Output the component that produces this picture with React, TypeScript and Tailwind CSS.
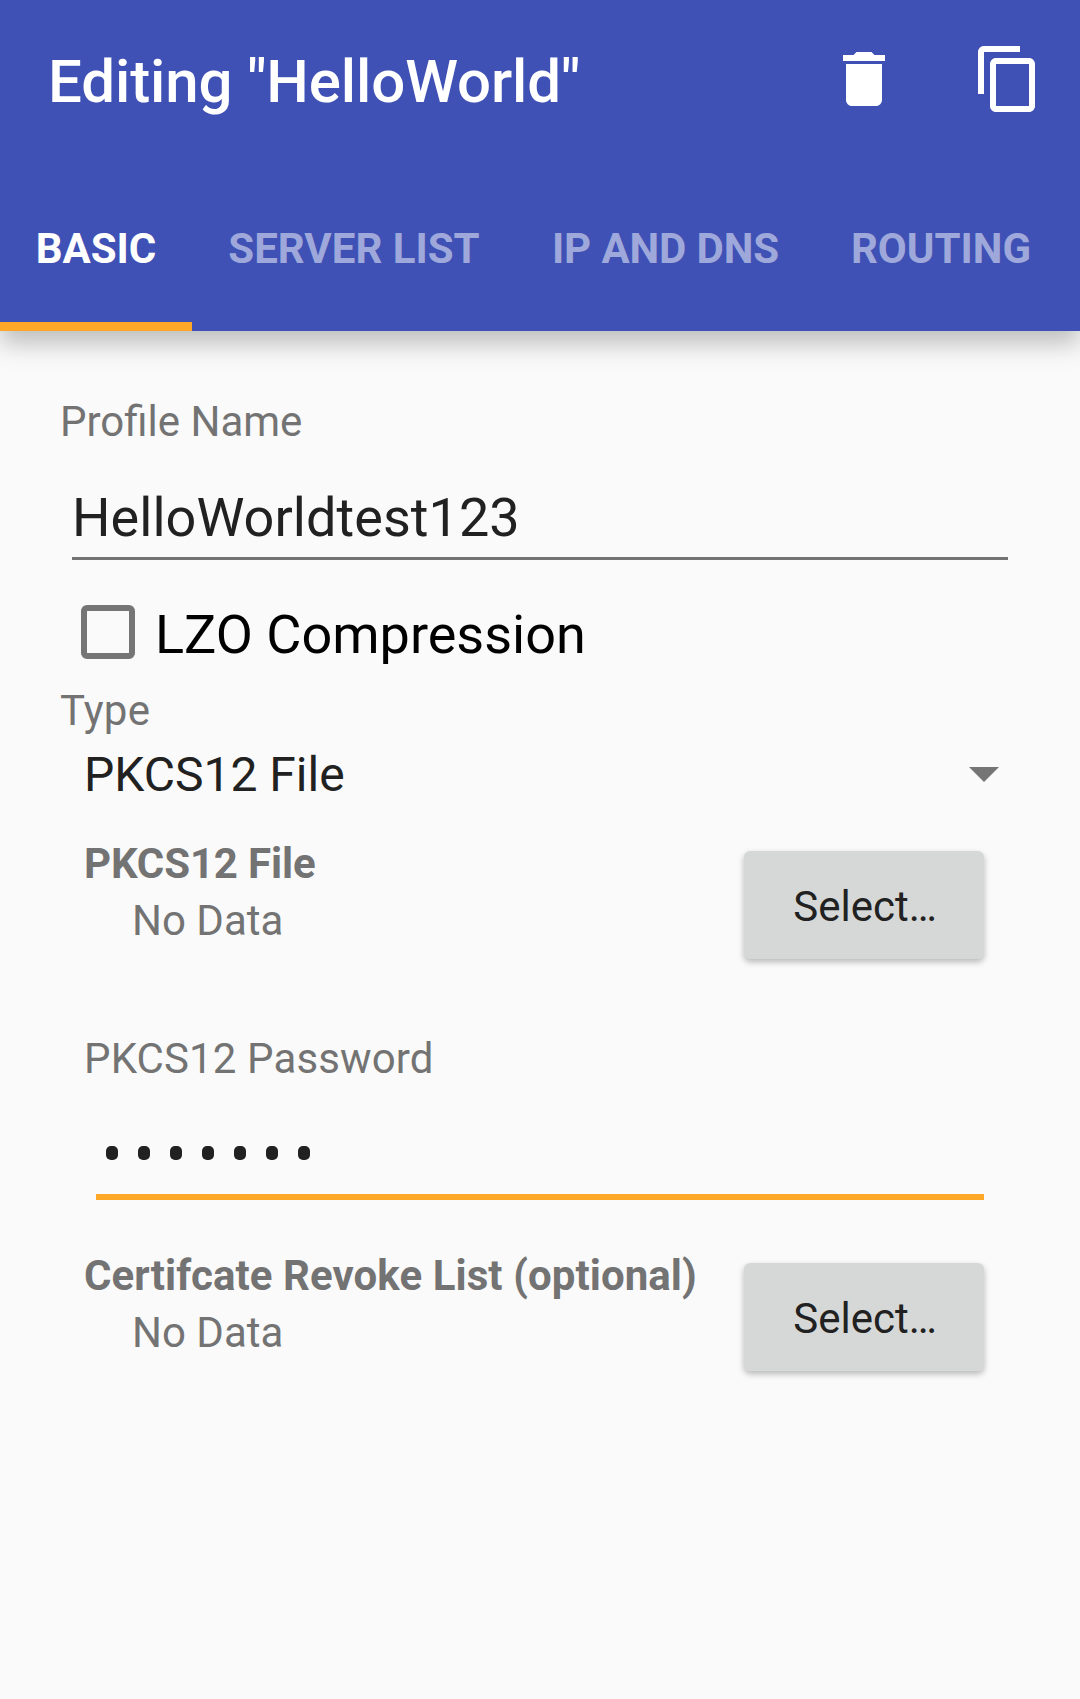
import React from "react";

function Tab({ label, active, className }: { label: string; active?: boolean; className: string }) {
  return (
    <div className={`relative flex h-[154px] shrink-0 items-center justify-center pb-[10px] text-[42px] leading-none font-bold whitespace-nowrap ${active ? "text-white" : "text-[#9fa8da]"} ${className}`}>
      {label}
      {active && <span className="absolute inset-x-0 bottom-0 h-[9px] bg-[#ffa726]" />}
    </div>
  );
}

function FileRow({ title, className }: { title: string; className: string }) {
  return (
    <div className="flex h-[134px] justify-between pr-3">
      <div className="flex flex-col">
        <div className={`h-[57px] text-[42px] leading-[57px] font-bold whitespace-nowrap text-[#737373] ${className}`}>{title}</div>
        <div className="h-[57px] pl-12 text-[42px] leading-[57px] text-[#737373]">No Data</div>
      </div>
      <button className="mt-[16px] flex h-[108px] w-[240px] items-center justify-center rounded-[6px] bg-[#d6d8d7] pt-[3px] pl-[2px] text-[42px] text-[#212121] shadow-[0_3px_6px_rgba(0,0,0,0.27)]">
        Select…
      </button>
    </div>
  );
}

export default function App() {
  return (
    <div className="flex h-[1699px] w-[1080px] flex-col overflow-hidden bg-[#fafafa] font-['Roboto',sans-serif]">
      <header className="relative h-[331px] shrink-0 bg-[#3f51b5] shadow-[0_12px_24px_rgba(0,0,0,0.25)]">
        <div className="flex h-[177px] justify-between pl-12">
          <h1 className="pt-[47px] text-[60px] leading-[70px] font-medium tracking-[-0.1px] whitespace-nowrap text-white">Editing "HelloWorld"</h1>
          <div className="flex gap-[72px] pt-[43px] pr-9 text-white">
            <svg className="h-[72px] w-[72px]" viewBox="0 0 24 24" fill="currentColor">
              <path d="M6 19c0 1.100.900 2 2 2h8c1.100 0 2-.9 2-2V7H6v12zM19 4h-3.500l-1-1h-5l-1 1H5v2h14V4z" />
            </svg>
            <svg className="h-[72px] w-[72px]" viewBox="0 0 24 24" fill="currentColor">
              <path d="M16 1H4c-1.100 0-2 .9-2 2v14h2V3h12V1zm3 4H8c-1.100 0-2 .9-2 2v14c0 1.100.9 2 2 2h11c1.100 0 2-.9 2-2V7c0-1.100-.9-2-2-2zm0 16H8V7h11v14z" />
            </svg>
          </div>
        </div>
        <nav className="flex overflow-hidden">
          <Tab label="BASIC" active className="w-[192px]" />
          <Tab label="SERVER LIST" className="w-[324px]" />
          <Tab label="IP AND DNS" className="w-[299px] tracking-[-0.1px]" />
          <Tab label="ROUTING" className="w-[252px]" />
        </nav>
      </header>
      <main className="flex flex-col px-[60px] pt-[62px]">
        <label className="h-[57px] text-[42px] leading-[57px] text-[#737373]">Profile Name</label>
        <div className="mx-3 mt-[28px] h-[82px] border-b-[3px] border-[#737373] text-[54px] leading-[80px] tracking-[0.05px] text-[#212121]">HelloWorldtest123</div>
        <div className="mt-[30px] flex h-[86px] items-start pt-[15px] pl-[21px] text-[54px] text-black">
          <span className="mr-5 h-[54px] w-[54px] rounded-[6px] border-[6px] border-[#757575]" />
          <span className="leading-[60px]">LZO Compression</span>
        </div>
        <label className="mt-[6px] h-[57px] text-[42px] leading-[57px] tracking-[0.2px] text-[#737373]">Type</label>
        <div className="flex h-[70px] items-center justify-between pr-[21px] pl-6 text-[48px] text-[#212121]">
          <span className="pt-[2px]">PKCS12 File</span>
          <span className="h-0 w-0 border-x-[15px] border-t-[15px] border-x-transparent border-t-[#757575]" />
        </div>
        <div className="mt-[26px] flex flex-col px-6">
          <FileRow title="PKCS12 File" className="tracking-[-0.15px]" />
          <label className="mt-[61px] h-[57px] text-[42px] leading-[57px] tracking-[0.13px] text-[#737373]">PKCS12 Password</label>
          <div className="mr-3 ml-3 flex h-[113px] items-center gap-5 border-b-[6px] border-[#ffa726] pt-[25px] pl-[10px]">
            {[0, 1, 2, 3, 4, 5, 6].map((i) => (
              <span key={i} className="h-[14px] w-[12px] rounded-[5px] bg-[#212121]" />
            ))}
          </div>
          <div className="mt-[47px]">
            <FileRow title="Certifcate Revoke List (optional)" className="tracking-[0.08px]" />
          </div>
        </div>
      </main>
    </div>
  );
}
